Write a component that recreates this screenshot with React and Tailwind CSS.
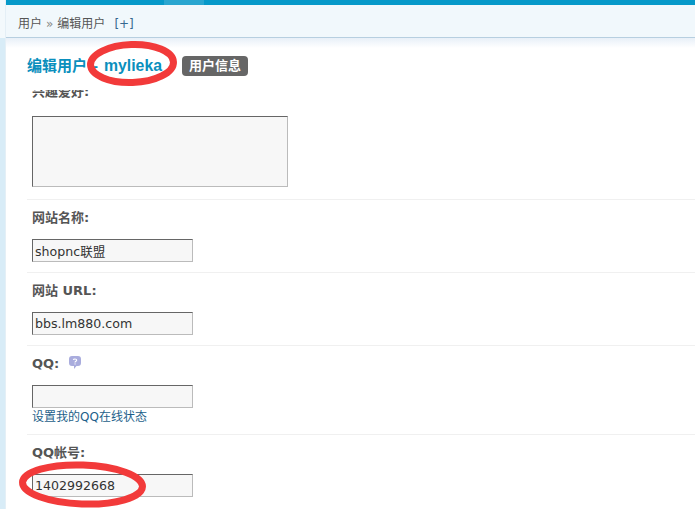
const sans = "font-['DejaVu_Sans','Noto_Sans_CJK_SC',sans-serif]";

function Field({ label, value, help, link, last }) {
  return (
    <div className={last ? "ml-[21px] pl-[5px] pt-[10px]" : "ml-[21px] pl-[5px] pt-[10px] pb-[10px] border-b border-[#f0f0f0]"}>
      <div className="h-[16px] flex items-center">
        <label className="text-[13px] leading-[16px] font-bold text-[#555]">{label}</label>
        {help && <HelpIcon />}
      </div>
      <input
        type="text"
        readOnly
        value={value}
        className="block mt-[13px] w-[161px] h-[23px] px-[2px] bg-[#f7f7f7] border border-t-[#666] border-l-[#666] border-r-[#bbb] border-b-[#bbb] text-[12.6px] text-[#333] outline-none"
      />
      {link && <a className="block h-[16px] text-[12px] leading-[18px] text-[#1d5f8a]">{link}</a>}
    </div>
  );
}

function HelpIcon() {
  return (
    <svg width="14" height="15" viewBox="0 0 14 15" className="ml-[9px] mt-[-4px]">
      <path d="M4 1h6a3 3 0 0 1 3 3v4a3 3 0 0 1-3 3H8.5L6 14v-3H4a3 3 0 0 1-3-3V4a3 3 0 0 1 3-3z" fill="#a9acdd" />
      <path d="M5.3 4.8c.2-1 3.3-1.2 3.4.3.1 1.2-1.7 1.2-1.7 2.4" fill="none" stroke="#fff" strokeWidth="1.1" />
      <rect x="6.5" y="8.4" width="1.1" height="1.1" fill="#fff" />
    </svg>
  );
}

export default function App() {
  return (
    <div className={`${sans} relative flex h-[509px] overflow-hidden bg-white`}>
      <div className="w-[6px] shrink-0 flex flex-col border-r border-[#e4eff6]">
        <div className="h-[38px] bg-[#f3f9fc]" />
        <div className="flex-1 bg-[#d8ecf7]" />
      </div>

      <div className="flex-1 min-w-0">
        <div className="h-[5px] bg-[#0699c9] flex">
          <div className="ml-[158px] w-[40px] bg-[#2aa6d0]" />
        </div>
        <div className="h-[33px] flex items-center pl-[12px] pt-[5px] bg-[#f1f8fc] border-b border-[#b7cfe0] text-[12px] text-[#555]">
          <span>用户</span>
          <span className="mx-[4px] text-[#888]">»</span>
          <span>编辑用户</span>
          <span className="ml-[9px] text-[#36688f]">[+]</span>
        </div>
        <div className="h-[10px] bg-gradient-to-b from-[#e8f0f8] to-white" />

        <div className="h-[36px] mb-[6px] flex items-center pl-[21px]">
          <h2 className="flex items-baseline text-[15px] font-bold text-[#0a8fbd] font-['Liberation_Sans','Noto_Sans_CJK_SC',sans-serif]">
            <span>编辑用户</span>
            <span className="ml-[6px] w-[11px]">-</span>
            <span className="text-[15.8px]">mylieka</span>
          </h2>
          <span className="ml-[20px] h-[20px] w-[66px] flex items-center justify-center rounded-[4px] bg-[#666] text-white text-[13px] font-bold">
            用户信息
          </span>
        </div>

        <div className="pl-[26px] h-[10px] overflow-hidden">
          <div className="mt-[-6px] text-[13px] leading-[16px] font-bold text-[#555]">兴趣爱好:</div>
        </div>
        <div className="ml-[21px] pl-[5px] pt-[16px] pb-[12px] border-b border-[#f0f0f0]">
          <textarea
            readOnly
            className="block w-[256px] h-[71px] resize-none bg-[#f7f7f7] border border-t-[#666] border-l-[#666] border-r-[#bbb] border-b-[#bbb] outline-none"
          />
        </div>

        <Field label="网站名称:" value="shopnc联盟" />
        <Field label="网站 URL:" value="bbs.lm880.com" />
        <Field label="QQ:" value="" help link="设置我的QQ在线状态" />
        <Field label="QQ帐号:" value="1402992668" last />
      </div>

      {/* red hand-drawn marks over the page */}
      <svg width="695" height="509" viewBox="0 0 695 509" className="absolute inset-0 pointer-events-none">
        <ellipse cx="132" cy="63.5" rx="41.5" ry="19" transform="rotate(-2 132 63.5)" fill="none" stroke="#f23a3a" strokeWidth="7" />
        <ellipse cx="82.5" cy="484.5" rx="60" ry="19.5" transform="rotate(2 82.5 484.5)" fill="none" stroke="#f23a3a" strokeWidth="7" />
      </svg>
    </div>
  );
}
